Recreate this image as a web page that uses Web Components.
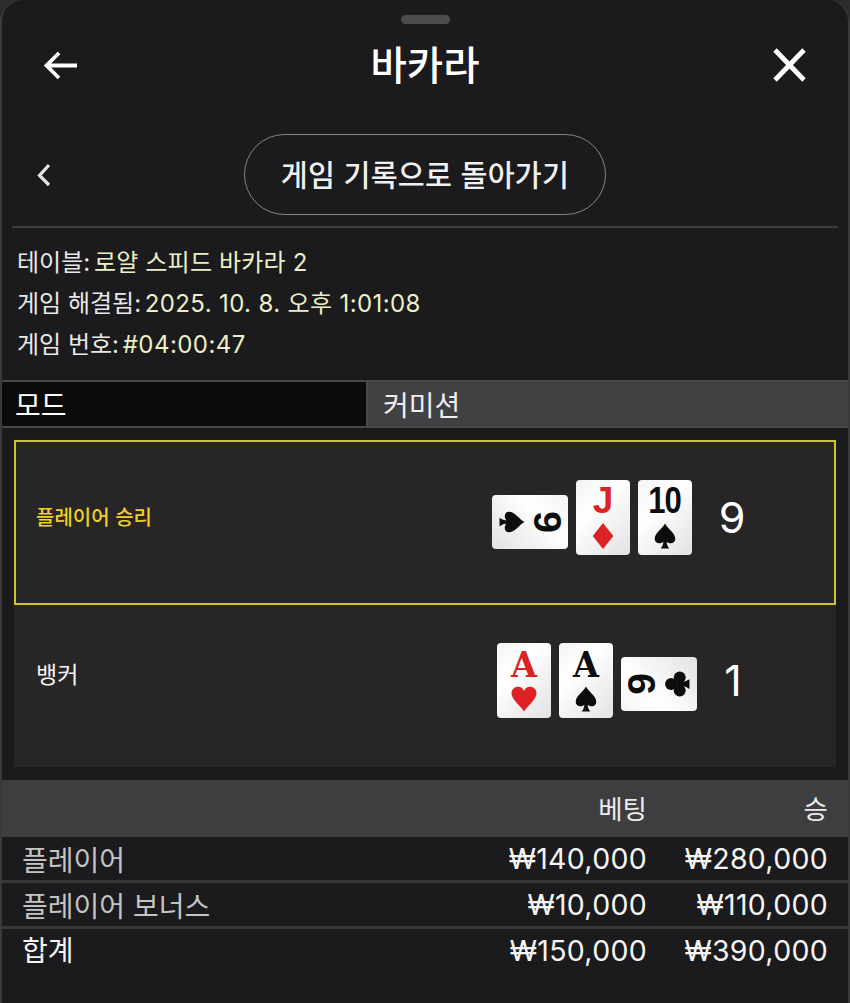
<!DOCTYPE html>
<html lang="ko">
<head>
<meta charset="utf-8">
<title>바카라</title>
<style>
html,body{margin:0;padding:0;background:#2c2c2e;}
body{font-family:"Inter","Noto Sans CJK KR",sans-serif;color:#fff;}
</style>
</head>
<body>
<bac-sheet>
  <sheet-header title="바카라"></sheet-header>
  <back-row label="게임 기록으로 돌아가기"></back-row>
  <info-list>
    <info-line style="--ls:.18px" label="테이블:" value="로얄 스피드 바카라 2"></info-line>
    <info-line style="--ls:.37px" label="게임 해결됨:" value="2025. 10. 8. 오후 1:01:08"></info-line>
    <info-line style="--ls:.44px" label="게임 번호:" value="#04:00:47"></info-line>
  </info-list>
  <mode-tabs left="모드" right="커미션"></mode-tabs>
  <hand-list>
    <hand-row label="플레이어 승리" score="9" win>
      <play-card rank="9" suit="spade" turn="cw"></play-card>
      <play-card rank="J" suit="diamond"></play-card>
      <play-card rank="10" suit="spade"></play-card>
    </hand-row>
    <hand-row label="뱅커" score="1">
      <play-card rank="A" suit="heart"></play-card>
      <play-card rank="A" suit="spade"></play-card>
      <play-card rank="9" suit="club" turn="ccw"></play-card>
    </hand-row>
  </hand-list>
  <bet-table>
    <bet-row head name="" bet="베팅" win="승"></bet-row>
    <bet-row name="플레이어" bet="₩140,000" win="₩280,000"></bet-row>
    <bet-row name="플레이어 보너스" bet="₩10,000" win="₩110,000"></bet-row>
    <bet-row total name="합계" bet="₩150,000" win="₩390,000"></bet-row>
  </bet-table>
</bac-sheet>
<script>
const SUITS={
 spade:'<path d="M12 .5C9.500 5.500 2.500 9 2.500 14.800c0 3.900 4.600 5.200 8 2.400-.2 2.600-1 4.600-2.600 6.300h8.200c-1.600-1.700-2.400-3.700-2.600-6.300 3.400 2.800 8 1.500 8-2.400C21.500 9 14.500 5.500 12 .5z"/>',
 heart:'<path d="M12 23.500C8 17.500.5 12.500.5 6.800.5 3 3.300.8 6.500.8c2.700 0 4.500 1.600 5.500 3.800C13 2.400 14.800.8 17.500.8c3.200 0 6 2.200 6 6 0 5.700-7.500 10.700-11.500 16.700z"/>',
 diamond:'<path d="M12 0l9.500 12L12 24 2.500 12z"/>',
 club:'<circle cx="12" cy="6.500" r="5.500"/><circle cx="6" cy="14.500" r="5.500"/><circle cx="18" cy="14.500" r="5.500"/><path d="M11 9h2c0 6 .8 10.500 3.500 14.500h-9C10.200 19.500 11 15 11 9z"/>'
};
function def(name,css,html){
  customElements.define(name,class extends HTMLElement{
    connectedCallback(){
      if(this.shadowRoot)return;
      const r=this.attachShadow({mode:'open'});
      r.innerHTML='<style>'+css+'</style>'+(typeof html==='function'?html(this):html);
    }
  });
}
const attr=(e,n)=>e.getAttribute(n)||'';
def('bac-sheet',`:host{display:flex;flex-direction:column;box-sizing:border-box;width:850px;height:1003px;background:#1b1a1c;border-radius:22px 22px 0 0;border:solid #3a3a3c;border-width:0 2px;overflow:hidden}`,'<slot></slot>');
def('sheet-header',`
 :host{display:flex;flex-direction:column;align-items:center}
 .h{width:49px;height:9px;border-radius:5px;background:#4c4c4e;margin-top:15px}
 .r{width:100%;height:81px;display:flex;align-items:center;justify-content:space-between;padding:0 41px;box-sizing:border-box}
 h1{margin:-4px 0 0;font:500 39.500px/1 "Noto Sans CJK KR",sans-serif;color:#fff}
 svg{display:block;width:36px;height:36px;fill:none;stroke:#fff}
`,e=>`<div class="h"></div><div class="r">
 <svg viewBox="0 0 36 36" stroke-width="3.800"><path d="M34 18.500H4M16 6L3.500 18.500 16 31"/></svg>
 <h1>${attr(e,'title')}</h1>
 <svg viewBox="0 0 36 36" stroke-width="4.800"><path d="M4 3l29 30M33 3L4 33"/></svg></div>`);
def('back-row',`
 :host{display:flex;align-items:center;justify-content:center;margin:29px 10px 0;height:92px;border-bottom:2px solid #3d3d3f}
 .w{flex:1;display:flex;align-items:center;justify-content:center;height:81px;margin-bottom:11px}
 svg{width:16px;height:24px;fill:none;stroke:#e4e4e4;stroke-width:3.200;flex:none;margin-left:24px;margin-right:-40px}
 button{margin:0 auto;width:362px;height:81px;box-sizing:border-box;border:1.500px solid #858585;border-radius:41px;background:none;color:#f0f0f0;font:500 29.300px/1 "Noto Sans CJK KR",sans-serif;padding:0 0 2px;letter-spacing:.2px}
`,e=>`<div class="w"><svg viewBox="0 0 16 24"><path d="M13 2L3.500 12.500 13 22"/></svg><button>${attr(e,'label')}</button></div>`);
def('info-list',`:host{display:flex;flex-direction:column;padding:14px 0 15px 15px}`,'<slot></slot>');
def('info-line',`
 :host{display:block;height:41px;font:400 24px/41px "Inter","Noto Sans CJK KR",sans-serif;color:#e9e9e9;white-space:nowrap}
 b{font-weight:400;color:#edf0c6;margin-left:-3px;letter-spacing:var(--ls,0)}
`,e=>`${attr(e,'label')} <b>${attr(e,'value')}</b>`);
def('mode-tabs',`
 :host{display:flex;height:44px;border:solid #4a4a4c;border-width:2px 0;font:400 28px/44px "Noto Sans CJK KR",sans-serif;color:#fff}
 div{box-sizing:border-box}
 .a{width:364px;background:#0b0b0c;padding-left:13px}
 .b{flex:1;background:#414043;border-left:2px solid #4a4a4c;padding-left:15px;color:#eee}
`,e=>`<div class="a">${attr(e,'left')}</div><div class="b">${attr(e,'right')}</div>`);
def('hand-list',`:host{display:flex;flex-direction:column;padding:12px 12px 11px}`,'<slot></slot>');
def('hand-row',`
 :host{display:flex;align-items:center;box-sizing:border-box;background:#272526;font:400 23px "Noto Sans CJK KR",sans-serif;color:#f4f4f4;height:162px;padding-bottom:12px}
 :host([win]){height:165px;border:2px solid #d2c32c;padding-bottom:10px;color:#f0cf2c}
 .n{width:483px;padding-left:22px;box-sizing:border-box;flex:none;margin-top:-14px}
 :host([win]) .n{width:476px;padding-left:20px;margin-top:-2px;font-weight:500;font-size:20px}
 .h{display:flex;align-items:center;gap:8px}
 .s{margin-left:21px;font:400 43px/1 "Inter",sans-serif;color:#fff;width:30px;text-align:center}
 :host([win]) .s{margin-left:25px}
`,e=>`<div class="n">${attr(e,'label')}</div><div class="h"><slot></slot></div><div class="s">${attr(e,'score')}</div>`);
def('play-card',`
 :host{display:flex;align-items:center;justify-content:center;flex:none;width:54px;height:75px}
 :host([turn]){width:76px;height:54px;margin-top:8px}
 .c{flex:none;width:54px;height:75px;box-sizing:border-box;border-radius:4px;background:linear-gradient(135deg,#f4f4f4,#fff 35%,#e2e2e2);display:flex;flex-direction:column;align-items:center;padding-top:6px;color:#0d0d0d}
 :host([turn]) .c{height:76px}
 :host([turn="cw"]) .c{transform:rotate(90deg)}
 :host([turn="ccw"]) .c{transform:rotate(-90deg)}
 .c.red{color:#dd2226}
 .r{font:700 37px/30px "Liberation Sans",sans-serif;height:30px}
 .r.n{font:700 39px/30px "Liberation Sans",sans-serif}
 .r.A{font:700 36px/30px "DejaVu Serif",serif;transform:scaleX(.93)}
 .r.t{transform:scaleX(.84);letter-spacing:-1px}
 svg{display:block;width:26px;height:26px;margin-top:7px;fill:currentColor}
`,e=>{const r=attr(e,'rank'),s=attr(e,'suit');
 const red=(s==='heart'||s==='diamond')?'red':'';
 const k=r==='A'?'A':r==='10'?'t':r==='9'?'n':'';
 return `<div class="c ${red}"><div class="r ${k}">${r}</div><svg viewBox="0 0 24 24">${SUITS[s]}</svg></div>`;});
def('bet-table',`:host{display:flex;flex-direction:column;margin-top:2px}`,'<slot></slot>');
def('bet-row',`
 :host{display:grid;grid-template-columns:1fr 180px 181px;height:46px;align-items:center;box-sizing:border-box;border-bottom:3px solid #38373a;padding:1px 20px 0;font:400 28.500px/1 "Inter","Noto Sans CJK KR",sans-serif;color:#f4f4f4;letter-spacing:.3px}
 :host([head]){height:57px;background:#3e3d40;border:0;color:#ececec;padding-top:0}
 :host([total]){border:0;padding-top:0;height:44px}
 .n{color:#c4c4c4;font-family:"Noto Sans CJK KR",sans-serif;font-size:28px;letter-spacing:0}
 :host([total]) .n{color:#f4f4f4;margin-top:-4px}
 .v{text-align:right;white-space:nowrap}
 :host([head]) .v{font-family:"Noto Sans CJK KR",sans-serif;font-size:26.500px;letter-spacing:0}
`,e=>`<div class="n">${attr(e,'name')}</div><div class="v">${attr(e,'bet')}</div><div class="v">${attr(e,'win')}</div>`);
</script>
</body>
</html>
